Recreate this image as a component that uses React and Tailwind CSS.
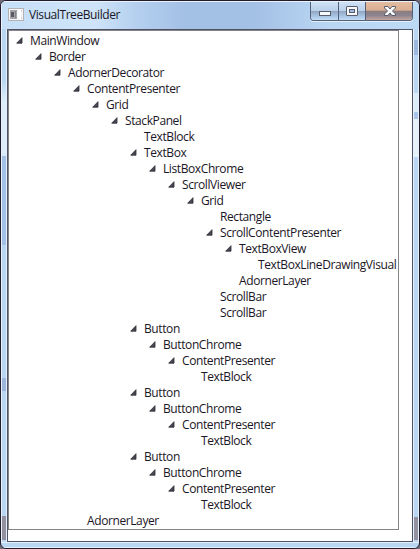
const nodes = [
  [0, 'MainWindow', true],
  [1, 'Border', true],
  [2, 'AdornerDecorator', true],
  [3, 'ContentPresenter', true],
  [4, 'Grid', true],
  [5, 'StackPanel', true],
  [6, 'TextBlock', false],
  [6, 'TextBox', true],
  [7, 'ListBoxChrome', true],
  [8, 'ScrollViewer', true],
  [9, 'Grid', true],
  [10, 'Rectangle', false],
  [10, 'ScrollContentPresenter', true],
  [11, 'TextBoxView', true],
  [12, 'TextBoxLineDrawingVisual', false],
  [11, 'AdornerLayer', false],
  [10, 'ScrollBar', false],
  [10, 'ScrollBar', false],
  [6, 'Button', true],
  [7, 'ButtonChrome', true],
  [8, 'ContentPresenter', true],
  [9, 'TextBlock', false],
  [6, 'Button', true],
  [7, 'ButtonChrome', true],
  [8, 'ContentPresenter', true],
  [9, 'TextBlock', false],
  [6, 'Button', true],
  [7, 'ButtonChrome', true],
  [8, 'ContentPresenter', true],
  [9, 'TextBlock', false],
  [3, 'AdornerLayer', false],
];

function TreeRow({ depth, label, expanded }) {
  return (
    <div className="flex h-4 items-center" style={{ paddingLeft: depth * 19 + 7 }}>
      <span className="flex w-[14px] shrink-0 pb-px">
        {expanded && (
          <svg width="7" height="7" viewBox="0 0 7 7">
            <path d="M6 0.7V6.2H0.7Z" fill="#4b4854" stroke="#292632" strokeWidth="0.8" />
          </svg>
        )}
      </span>
      <span className="text-[12px] leading-4 tracking-[-0.4px] whitespace-nowrap">{label}</span>
    </div>
  );
}

function AppIcon() {
  return (
    <svg width="16" height="13" viewBox="0 0 16 13" className="shrink-0">
      <rect x="0.5" y="0.5" width="15" height="12" fill="#f4f7fa" stroke="#b5b0b2" />
      <rect x="2" y="2" width="7" height="9" fill="#a4a4a8" />
      <rect x="3" y="4" width="3" height="5" fill="#5a5963" />
      <path d="M7.5 3V10" stroke="#85848b" />
      <rect x="10" y="2" width="3" height="9" fill="#ffffff" />
      <path d="M13 3H14M13 10H14" stroke="#c9a18e" />
    </svg>
  );
}

function CaptionButtons() {
  return (
    <div className="mr-[6px] flex h-[19px] self-start overflow-hidden rounded-b-[4px] border border-t-0 border-[#54607a] shadow-[0_1px_0_#e4f1fb]">
      <div className="w-[28px] border-r border-[#54607a] bg-[linear-gradient(#cfe2f5_0%,#b9d0ea_50%,#93a6c2_52%,#a9c4e4_78%,#c3ddf5_100%)]">
        <svg width="27" height="18">
          <rect x="8.5" y="9.5" width="11" height="4" fill="#f5f9fc" stroke="#595c69" />
        </svg>
      </div>
      <div className="w-[27px] border-r border-[#54607a] bg-[linear-gradient(#cfe2f5_0%,#b9d0ea_50%,#93a6c2_52%,#a9c4e4_78%,#c3ddf5_100%)]">
        <svg width="26" height="18">
          <rect x="7.5" y="4.5" width="11" height="9" rx="0.5" fill="#f5f9fc" stroke="#595c69" />
          <rect x="10.5" y="7.5" width="5" height="3" fill="#9bbfe2" stroke="#595c69" />
        </svg>
      </div>
      <div className="w-[46px] bg-[linear-gradient(#e3bda1_0%,#d9ae92_46%,#8c7c80_50%,#8c8490_75%,#c3a69c_100%)]">
        <svg width="46" height="18">
          <path d="M18.5 4.5H22L24 7L26 4.5H29.5V6L26.5 9L29.5 12V13.5H26L24 11L22 13.5H18.5V12L21.5 9L18.5 6Z" fill="#f5f9fc" stroke="#595c69" />
        </svg>
      </div>
    </div>
  );
}

export default function App() {
  return (
    <div className="h-[549px] w-[420px] bg-[#716b78] font-['Open_Sans','Noto_Sans',sans-serif] text-[#1a1626]">
      <div className="flex h-full flex-col overflow-hidden rounded-[6px] border border-[#211b2c] bg-[#b9d6f3]">
        <header className="flex h-7 shrink-0 items-center border-t border-l border-[#e8f3fc] bg-[linear-gradient(90deg,#c6dff7_0%,#cfe4f8_22%,#b5d0ef_32%,#a3c0e5_44%,#a3c0e5_60%,#b9d6f3_78%,#bddaf5_100%)] pb-[2px] pl-[6px]">
          <AppIcon />
          <h1 className="ml-[5px] flex-1 text-[12px] leading-4 font-normal tracking-[-0.42px]">VisualTreeBuilder</h1>
          <CaptionButtons />
        </header>
        <div className="flex min-h-0 flex-1">
          <div className="w-[6px] shrink-0 border-r border-l border-[#e4f1fb] bg-[linear-gradient(#b9d6f3_0%,#b9d6f3_10%,#dcecf9_14%,#dcecf9_24%,#b9d6f3_28%)]">
            <div className="h-[127px]" />
            <div className="h-[89px] bg-[#a3c0e5]" />
            <div className="h-[133px]" />
            <div className="h-[13px] bg-[#9db5d9]" />
            <div className="h-[125px]" />
            <div className="h-[24px] bg-[#9391a0]" />
          </div>
          <main className="h-[513px] w-[406px] shrink-0 border border-[#4f5264] bg-white">
            <div className="h-[500px] w-[391px] border border-[#858387] bg-white pt-[2px]">
              {nodes.map(([depth, label, expanded], i) => (
                <TreeRow key={i} depth={depth} label={label} expanded={expanded} />
              ))}
            </div>
          </main>
          <div className="w-[6px] shrink-0 border-r border-l border-[#e4f1fb] bg-[#b9d6f3]">
            <div className="h-[11px]" />
            <div className="h-[15px] bg-[#9db8df]" />
            <div className="h-[38px]" />
            <div className="h-[19px] bg-[#dcecf9]" />
            <div className="h-[7px] bg-[#a9c5e8]" />
            <div className="h-[38px] bg-[#e6f1fa]" />
            <div className="h-[360px]" />
            <div className="h-[23px] bg-[#9391a0]" />
          </div>
        </div>
        <div className="h-[6px] shrink-0 border-t border-b border-[#e4f1fb]" />
      </div>
    </div>
  );
}
